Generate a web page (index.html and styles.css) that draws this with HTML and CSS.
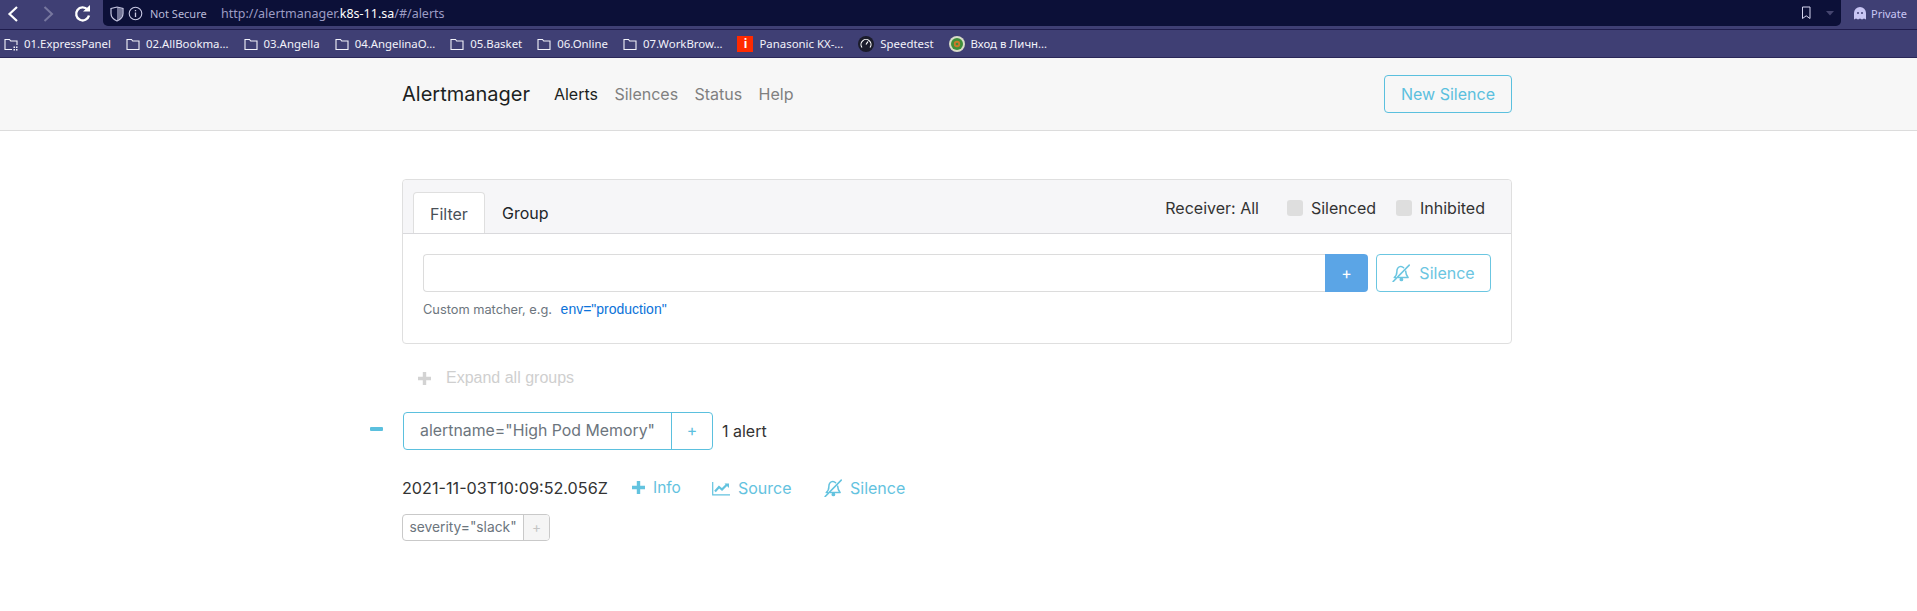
FILE: index.html
```html
<!DOCTYPE html>
<html lang="en">
<head>
<meta charset="utf-8">
<title>Alertmanager</title>
<link rel="stylesheet" href="styles.css">
</head>
<body>
<svg class="defs" width="0" height="0">
  <symbol id="folder" viewBox="0 0 14 14"><path d="M1 2.500h4.500l1.200 1.500h6.300v8.500h-12z" fill="none" stroke="currentColor" stroke-width="1.100"/></symbol>
  <symbol id="bell" viewBox="0 0 24 24"><g fill="none" stroke="currentColor" stroke-width="2" stroke-linecap="round" stroke-linejoin="round"><path d="M1.500 23.500 23 1.500"/><path d="M15.500 5C14 3.500 12 3 10.500 3.500 7.500 4.500 6.500 7 6.500 10c0 3.500-1.500 6.500-3.500 8h1.500"/><path d="M18.200 9.500c.2 3.500 1.300 6.500 3.300 8.500H8.500"/></g><circle cx="12.500" cy="20.500" r="2.500" fill="currentColor"/></symbol>
</svg>
<header class="browser-top">
  <div class="nav-buttons">
    <svg class="nav-icon" width="22" height="22" viewBox="0 0 22 22"><path d="M15 4 7.500 11l7.500 7" fill="none" stroke="#fff" stroke-width="2.200"/></svg>
    <svg class="nav-icon" width="22" height="22" viewBox="0 0 22 22"><path d="M7.500 4 15 11l-7.500 7" fill="none" stroke="#77779f" stroke-width="2"/></svg>
    <svg class="nav-icon" width="22" height="22" viewBox="0 0 22 22"><path d="M16.500 6.500a6.500 6.500 0 1 0 1.500 6" fill="none" stroke="#fff" stroke-width="2.400"/><path d="M12 8.500h7V2z" fill="#fff"/></svg>
  </div>
  <div class="url-bar">
    <svg class="shield" width="14" height="16" viewBox="0 0 14 16"><path d="M1 2.500 7 1l6 1.500v5c0 3.500-2.500 6-6 7.500-3.500-1.500-6-4-6-7.500z" fill="none" stroke="#c9c9e4" stroke-width="1.200"/><path d="M7 1.500l5.500 1.400v4.600c0 3-2 5.400-5.500 7z" fill="#c9c9e4" opacity=".55"/></svg>
    <svg class="info" width="15" height="15" viewBox="0 0 15 15"><circle cx="7.500" cy="7.500" r="6.300" fill="none" stroke="#c9c9e4" stroke-width="1.100"/><path d="M7.500 6.500v4.500M7.500 4v1.300" stroke="#c9c9e4" stroke-width="1.300"/></svg>
    <span class="not-secure">Not Secure</span>
    <span class="url">http://alertmanager.<b>k8s-11.sa</b>/#/alerts</span>
    <span class="url-end">
      <svg width="10" height="14" viewBox="0 0 10 14"><path d="M1.500 1h7.500v11.500L5.200 9.800 1.500 12.500z" fill="none" stroke="#d6d6f0" stroke-width="1"/></svg>
      <svg class="caret" width="10" height="6" viewBox="0 0 10 6"><path d="M1 1h8L5 5.500z" fill="#45456f"/></svg>
    </span>
  </div>
  <div class="private">
    <svg width="12" height="13" viewBox="0 0 12 13"><path d="M0 12.500V6a6 6 0 0 1 12 0v6.500l-2-1-2 1-2-1-2 1-2-1z" fill="#c9c6f4"/><circle cx="4" cy="6" r="1" fill="#3f3f74"/><circle cx="8" cy="6" r="1" fill="#3f3f74"/></svg>
    <span>Private</span>
  </div>
</header>
<nav class="bookmarks">
  <a class="bm"><svg width="14" height="14" viewBox="0 0 14 14"><path d="M8 12.500H1V2.500h4.500l1.200 1.500h6.300v4" fill="none" stroke="currentColor" stroke-width="1.100"/><path d="M9.500 9.500H11v1.500H9.500zM12 9.500h1.500v1.500H12zM9.500 12H11v1.500H9.500zM12 12h1.500v1.500H12z" fill="currentColor"/></svg>01.ExpressPanel</a>
  <a class="bm"><svg width="14" height="14"><use href="#folder"/></svg>02.AllBookma…</a>
  <a class="bm"><svg width="14" height="14"><use href="#folder"/></svg>03.Angella</a>
  <a class="bm"><svg width="14" height="14"><use href="#folder"/></svg>04.AngelinaO…</a>
  <a class="bm"><svg width="14" height="14"><use href="#folder"/></svg>05.Basket</a>
  <a class="bm"><svg width="14" height="14"><use href="#folder"/></svg>06.Online</a>
  <a class="bm"><svg width="14" height="14"><use href="#folder"/></svg>07.WorkBrow…</a>
  <a class="bm"><span class="fav-red">i</span>Panasonic KX-…</a>
  <a class="bm"><svg width="16" height="16" viewBox="0 0 16 16"><circle cx="8" cy="8" r="8" fill="#1b1c2b"/><path d="M4 11.500a5 5 0 1 1 8 0" fill="none" stroke="#fff" stroke-width="1.100"/><path d="M8 8.500 10 5.500" stroke="#fff" stroke-width="1.200"/></svg>Speedtest</a>
  <a class="bm"><svg width="16" height="16" viewBox="0 0 16 16"><circle cx="8" cy="8" r="8" fill="#d8dcc8"/><circle cx="8" cy="8" r="6" fill="#3e8f3a"/><circle cx="8" cy="8" r="3.200" fill="#c9782a"/><circle cx="8" cy="8" r="1.300" fill="#3e8f3a"/></svg>Вход в Личн…</a>
</nav>
<nav class="navbar">
  <div class="container navbar-inner">
    <span class="brand">Alertmanager</span>
    <ul class="nav-links">
      <li class="active">Alerts</li>
      <li>Silences</li>
      <li>Status</li>
      <li>Help</li>
    </ul>
    <button class="btn-outline new-silence">New Silence</button>
  </div>
</nav>
<main class="container main">
  <section class="card">
    <div class="card-header">
      <div class="tabs">
        <span class="tab tab-active">Filter</span>
        <span class="tab tab-group">Group</span>
      </div>
      <div class="options">
        <span>Receiver: All</span>
        <label class="check"><i></i>Silenced</label>
        <label class="check check-last"><i></i>Inhibited</label>
      </div>
    </div>
    <div class="card-body">
      <div class="filter-row">
        <div class="input-group">
          <div class="text-input"></div>
          <button class="add-btn">+</button>
        </div>
        <button class="btn-outline silence-btn"><svg width="18" height="18"><use href="#bell"/></svg>Silence</button>
      </div>
      <p class="help">Custom matcher, e.g. <a>env="production"</a></p>
    </div>
  </section>
  <div class="expand">
    <svg width="13" height="13" viewBox="0 0 13 13"><path d="M6.500 0v13M0 6.500h13" stroke="#d3d3d3" stroke-width="3.400"/></svg>
    <span>Expand all groups</span>
  </div>
  <div class="group">
    <span class="collapse"></span>
    <div class="pill">
      <span class="pill-text">alertname="High Pod Memory"</span>
      <span class="pill-add">+</span>
    </div>
    <span class="count">1 alert</span>
  </div>
  <div class="alert-row">
    <span class="time">2021-11-03T10:09:52.056Z</span>
    <span class="action info-action"><svg width="13" height="13" viewBox="0 0 13 13"><path d="M6.500 0v13M0 6.500h13" stroke="#5bc0de" stroke-width="3.400"/></svg>Info</span>
    <span class="action source-action"><svg width="18" height="15" viewBox="0 0 18 15"><path d="M.7 1v12.800H18" fill="none" stroke="#5bc0de" stroke-width="1.200"/><path d="M3 10.500 7 6l3 2.500L15 3.500" fill="none" stroke="#5bc0de" stroke-width="2.200"/><path d="M12.500 2.500h4.500v4.500z" fill="#5bc0de"/></svg>Source</span>
    <span class="action silence-action"><svg width="18" height="18"><use href="#bell"/></svg>Silence</span>
  </div>
  <div class="label">
    <span class="label-text">severity="slack"</span>
    <span class="label-add">+</span>
  </div>
</main>
</body>
</html>
```

FILE: styles.css
```css
* { box-sizing: border-box; }
html, body { margin: 0; padding: 0; }
body {
  width: 1917px;
  height: 611px;
  overflow: hidden;
  background: #fff;
  color: #212529;
  font-family: Inter, "Liberation Sans", sans-serif;
}
.defs { position: absolute; }
.browser-top {
  height: 30px;
  display: flex;
  background: #3f3f74;
  border-bottom: 1px solid #1f1c4d;
  font-family: "Noto Sans", "Open Sans", sans-serif;
}
.nav-buttons {
  width: 103px;
  height: 28px;
  display: flex;
  align-items: center;
  padding-left: 2px;
  gap: 12.500px;
}
.nav-icon { flex: none; }
.url-bar {
  width: 1738px;
  height: 26px;
  background: #0c1038;
  border-radius: 0 0 5px 5px;
  display: flex;
  align-items: center;
  padding-left: 47px;
  position: relative;
  color: #c9c9e4;
}
.shield { position: absolute; left: 7px; top: 6px; }
.info { position: absolute; left: 25px; top: 6px; }
.not-secure { font-size: 11px; color: #b9b9d8; width: 71px; }
.url { font-size: 12.500px; color: #9c9cc4; }
.url b { color: #fff; font-weight: 400; }
.url-end {
  margin-left: auto;
  display: flex;
  align-items: center;
  gap: 14px;
  padding-right: 6px;
}
.private {
  flex: 1;
  height: 26px;
  display: flex;
  align-items: center;
  padding-left: 13px;
  gap: 5px;
  font-size: 11px;
  color: #c9c6f4;
}
.bookmarks {
  height: 28px;
  display: flex;
  align-items: center;
  padding-left: 4px;
  gap: 15px;
  background: #3f3f74;
  border-bottom: 1px solid #2a2758;
  font-family: "Noto Sans", "Open Sans", sans-serif;
  font-size: 11.400px;
  color: #f2f2fa;
}
.bm { display: flex; align-items: center; gap: 6px; white-space: nowrap; }
.fav-red {
  width: 16px;
  height: 16px;
  background: #ff2a00;
  color: #fff;
  font-weight: 700;
  font-size: 12px;
  line-height: 16px;
  text-align: center;
}
.container { width: 1110px; margin-left: 402px; }
.navbar {
  height: 73px;
  background: #f7f7f7;
  border-bottom: 1px solid #dcdcdc;
}
.navbar-inner { height: 72px; display: flex; align-items: center; }
.brand { font-size: 20px; line-height: 1; margin-right: 24px; color: #1c1f22; }
.nav-links {
  display: flex;
  gap: 16.400px;
  list-style: none;
  margin: 0;
  padding: 0;
  font-size: 16px;
  color: #808080;
}
.nav-links .active { color: #1c1f22; }
.btn-outline {
  background: transparent;
  border: 1px solid #5bc0de;
  border-radius: 4px;
  color: #5bc0de;
  font: inherit;
  font-size: 16px;
}
.new-silence { margin-left: auto; width: 128px; height: 38px; padding: 0; }
.main { padding-top: 48px; }
.card { height: 165px; border: 1px solid #dfdfdf; border-radius: 4px; }
.card-header {
  height: 54px;
  background: #f6f6f8;
  border-bottom: 1px solid #d9d9dc;
  border-radius: 4px 4px 0 0;
  display: flex;
  justify-content: space-between;
  padding: 12px 26px 0 10px;
}
.tabs { display: flex; font-size: 16px; }
.tab { height: 41px; padding: 11px 16px 0; }
.tab-group { padding-left: 17px; }
.tab-active {
  width: 72px;
  background: #fff;
  color: #495057;
  border: 1px solid #dfdfdf;
  border-bottom: 0;
  border-radius: 4px 4px 0 0;
}
.options {
  display: flex;
  align-items: center;
  height: 31px;
  gap: 28px;
  font-size: 16px;
  color: #333;
}
.check { display: flex; align-items: center; gap: 8px; }
.check-last { margin-left: -8px; }
.check i { width: 16px; height: 16px; background: #dedede; border-radius: 3px; }
.card-body { padding: 20px 20px 0; }
.filter-row { display: flex; gap: 8px; }
.input-group { display: flex; width: 945px; }
.text-input {
  flex: 1;
  height: 38px;
  border: 1px solid #dcdcdc;
  border-right: 0;
  border-radius: 4px 0 0 4px;
}
.add-btn {
  width: 43px;
  height: 38px;
  border: 0;
  background: #5ba5e6;
  color: #fff;
  font: inherit;
  font-size: 16px;
  border-radius: 0 4px 4px 0;
  padding: 0;
}
.silence-btn {
  width: 115px;
  height: 38px;
  padding: 0;
  display: flex;
  align-items: center;
  justify-content: center;
  gap: 9px;
  opacity: .9;
}
.help {
  margin: 9px 0 0;
  font-size: 12.800px;
  line-height: 16px;
  color: #6c757d;
}
.help a {
  color: #0b72d9;
  margin-left: 5px;
  font-size: 14px;
  font-family: "Liberation Sans", sans-serif;
}
.expand {
  display: flex;
  align-items: center;
  gap: 15px;
  height: 24px;
  margin: 22px 0 0 16px;
  font-size: 16px;
  color: #cfcfcf;
  font-family: "Liberation Sans", Inter, sans-serif;
}
.group {
  display: flex;
  align-items: center;
  height: 38px;
  margin-top: 22px;
  position: relative;
}
.collapse {
  position: absolute;
  left: -32px;
  top: 15px;
  width: 13px;
  height: 4px;
  background: #5bc0de;
  border-radius: 1px;
}
.pill {
  display: flex;
  width: 310px;
  height: 38px;
  border: 1px solid #5bc0de;
  border-radius: 4px;
  font-size: 15.850px;
  line-height: 36px;
  margin-left: 1px;
}
.pill-text { width: 268px; text-align: center; color: #6c757d; border-right: 1px solid #5bc0de; white-space: nowrap; }
.pill-add { flex: 1; text-align: center; color: #5bc0de; }
.count { margin-left: 9px; font-size: 16px; color: #333; }
.alert-row {
  display: flex;
  align-items: center;
  height: 26px;
  margin-top: 25px;
  font-size: 16px;
  color: #5bc0de;
}
.time { color: #333; width: 230px; white-space: nowrap; font-size: 16.200px; }
.action { display: flex; align-items: center; white-space: nowrap; opacity: .95; }
.info-action { gap: 8px; width: 80px; margin-top: -2px; font-size: 15.500px; }
.source-action { gap: 8px; width: 112px; }
.silence-action { gap: 8px; }
.label {
  display: flex;
  width: 148px;
  height: 27px;
  margin-top: 13px;
  border: 1px solid #c9c9c9;
  border-radius: 4px;
  font-size: 13.800px;
  line-height: 25px;
}
.label-text { width: 121px; text-align: center; color: #6c757d; border-right: 1px solid #c9c9c9; white-space: nowrap; }
.label-add { flex: 1; text-align: center; color: #c4c4c4; background: #f5f5f5; border-radius: 0 3px 3px 0; }
```
